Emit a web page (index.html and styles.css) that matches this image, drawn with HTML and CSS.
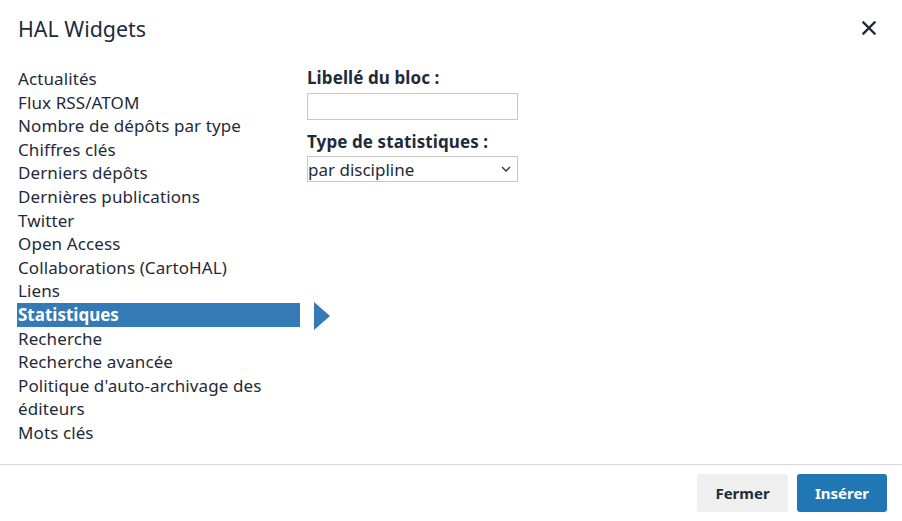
FILE: index.html
```html
<!DOCTYPE html>
<html lang="fr">
<head>
<meta charset="utf-8">
<title>HAL Widgets</title>
<link rel="stylesheet" href="styles.css">
</head>
<body>
<div class="modal">
  <div class="header">
    <h1 class="title">HAL Widgets</h1>
    <button class="close" aria-label="Fermer">
      <svg width="14" height="14" viewBox="0 0 14 14"><path d="M1.5 1.5 L12.5 12.5 M12.5 1.5 L1.5 12.5" stroke="#1f2937" stroke-width="2.4" stroke-linecap="square"/></svg>
    </button>
  </div>
  <div class="body">
    <ul class="list">
      <li>Actualités</li>
      <li>Flux RSS/ATOM</li>
      <li>Nombre de dépôts par type</li>
      <li>Chiffres clés</li>
      <li>Derniers dépôts</li>
      <li>Dernières publications</li>
      <li>Twitter</li>
      <li>Open Access</li>
      <li>Collaborations (CartoHAL)</li>
      <li>Liens</li>
      <li class="active">Statistiques</li>
      <li>Recherche</li>
      <li>Recherche avancée</li>
      <li>Politique d'auto-archivage des éditeurs</li>
      <li>Mots clés</li>
    </ul>
    <div class="arrow-col"><div class="arrow"></div></div>
    <div class="form">
      <label class="label">Libellé du bloc :</label>
      <input class="input" type="text">
      <label class="label">Type de statistiques :</label>
      <div class="select">
        <span>par discipline</span>
        <svg width="10" height="6" viewBox="0 0 10 6"><path d="M1 1 L5 5 L9 1" fill="none" stroke="#333" stroke-width="1.3"/></svg>
      </div>
    </div>
  </div>
  <div class="footer">
    <button class="btn btn-default">Fermer</button>
    <button class="btn btn-primary">Insérer</button>
  </div>
</div>
</body>
</html>
```
FILE: styles.css
```css
html, body { margin: 0; padding: 0; background: #fff; }
body { font-family: "Noto Sans", "Open Sans", sans-serif; color: #1f2a3a; width: 902px; height: 521px; overflow: hidden; }
.modal { width: 902px; height: 521px; display: flex; flex-direction: column; }
.header { display: flex; justify-content: space-between; align-items: center; padding: 14px 26px 0 18px; height: 28px; }
.title { margin: 0; font-size: 21.4px; font-weight: 400; color: #1f2a3a; }
.close { border: 0; background: none; padding: 0; width: 14px; height: 14px; display: flex; }
.body { display: flex; padding: 25px 0 0 17px; flex: 1; }
.list { list-style: none; margin: 0; padding: 0; width: 283px; flex: none; font-size: 17px; line-height: 23.6px; letter-spacing: 0.1px; }
.list li { padding-left: 1px; }
.list li.active { background: #337ab7; color: #fff; font-weight: 700; letter-spacing: 0; }
.arrow-col { width: 23px; flex: none; padding-top: 235px; padding-left: 14px; }
.arrow { width: 0; height: 0; border-top: 14px solid transparent; border-bottom: 14px solid transparent; border-left: 16px solid #337ab7; }
.form { display: flex; flex-direction: column; margin-left: -30px; width: 211px; }
.label { font-weight: 700; font-size: 17px; line-height: 22px; letter-spacing: 0.1px; }
.input { box-sizing: border-box; width: 211px; height: 27px; border: 1px solid #c8c8c8; margin: 4px 0 11px; padding: 0; }
.select { box-sizing: border-box; width: 211px; height: 26px; border: 1px solid #c8c8c8; margin-top: 3px; display: flex; align-items: center; justify-content: space-between; padding: 0 6px 0 0; font-size: 17px; }
.footer { border-top: 1px solid #d9d9d9; height: 56px; display: flex; justify-content: flex-end; align-items: center; padding-right: 15px; gap: 9px; }
.btn { font-family: inherit; font-size: 15px; font-weight: 700; border: 0; border-radius: 3px; width: 91px; height: 38px; padding: 0; }
.btn-default { background: #efefef; color: #1f2a3a; }
.btn-primary { background: #2077b4; color: #fff; width: 90px; }
```
